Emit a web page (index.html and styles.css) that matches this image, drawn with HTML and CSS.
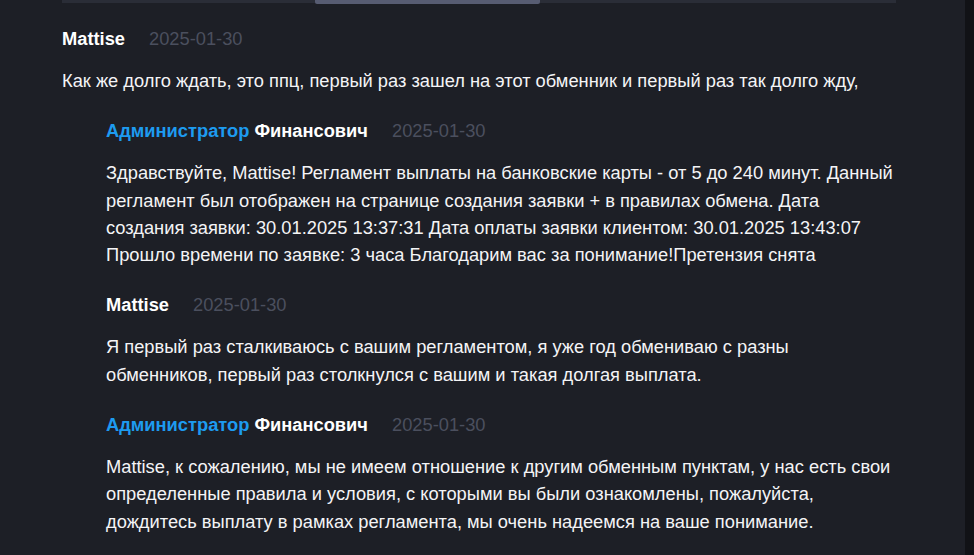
FILE: index.html
```html
<!DOCTYPE html>
<html lang="ru">
<head>
<meta charset="utf-8">
<link rel="stylesheet" href="styles.css">
</head>
<body>
<div class="page">
  <div class="main">
    <div class="track"><div class="thumb"></div></div>
    <div class="comment">
      <div class="head"><span class="name">Mattise</span><span class="date">2025-01-30</span></div>
      <p class="text">Как же долго ждать, это ппц, первый раз зашел на этот обменник и первый раз так долго жду,</p>
      <div class="replies">
        <div class="comment">
          <div class="head"><span class="name"><span class="role">Администратор</span> Финансович</span><span class="date">2025-01-30</span></div>
          <p class="text">Здравствуйте, Mattise! Регламент выплаты на банковские карты - от 5 до 240 минут. Данный регламент был отображен на странице создания заявки + в правилах обмена. Дата создания заявки: 30.01.2025 13:37:31 Дата оплаты заявки клиентом: 30.01.2025 13:43:07 Прошло времени по заявке: 3 часа Благодарим вас за понимание!Претензия снята</p>
        </div>
        <div class="comment">
          <div class="head"><span class="name">Mattise</span><span class="date">2025-01-30</span></div>
          <p class="text">Я первый раз сталкиваюсь с вашим регламентом, я уже год обмениваю с разны обменников, первый раз столкнулся с вашим и такая долгая выплата.</p>
        </div>
        <div class="comment">
          <div class="head"><span class="name"><span class="role">Администратор</span> Финансович</span><span class="date">2025-01-30</span></div>
          <p class="text">Mattise, к сожалению, мы не имеем отношение к другим обменным пунктам, у нас есть свои определенные правила и условия, с которыми вы были ознакомлены, пожалуйста, дождитесь выплату в рамках регламента, мы очень надеемся на ваше понимание.</p>
        </div>
      </div>
    </div>
  </div>
  <div class="edge"></div>
</div>
</body>
</html>
```
FILE: styles.css
```css
html, body {
  margin: 0;
  padding: 0;
  background: #1d1f26;
  height: 100%;
  overflow: hidden;
}
.page {
  display: flex;
  height: 555px;
  font-family: "Liberation Sans", Arial, sans-serif;
  color: #f4f4f6;
}
.main {
  flex: 1;
  padding: 0 69px 0 62px;
}
.edge {
  width: 9px;
  background: #111216;
}
.track {
  height: 3px;
  background: #2a2d37;
  position: relative;
  margin-bottom: 23px;
}
.thumb {
  position: absolute;
  left: 253px;
  top: 0;
  width: 225px;
  height: 4px;
  background: #575c72;
  border-radius: 0 0 2px 2px;
}
.head {
  display: flex;
  align-items: center;
  height: 26px;
  font-size: 18.3px;
}
.name {
  font-weight: bold;
  color: #ffffff;
}
.role {
  color: #1d9bf0;
}
.date {
  margin-left: 24px;
  color: #4b4f5e;
}
.text {
  margin: 15px 0 24px;
  font-size: 18.3px;
  line-height: 27.3px;
}
.replies {
  padding-left: 44px;
}
```
